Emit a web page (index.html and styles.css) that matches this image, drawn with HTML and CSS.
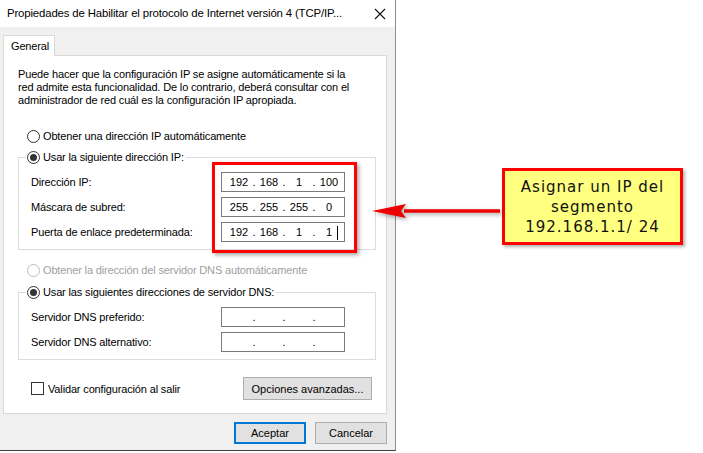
FILE: index.html
```html
<!DOCTYPE html>
<html lang="es">
<head>
    <meta charset="UTF-8">
    <meta name="viewport" content="width=device-width, initial-scale=1.0">
    <link rel="stylesheet" href="styles.css">
    <title>Propiedades TCP/IPv4</title>
</head>
<body>
    <div class="screen">
        <div class="window">
            <div class="titlebar">
                <span class="title">Propiedades de Habilitar el protocolo de Internet versión 4 (TCP/IP...</span>
                <svg class="close" width="12" height="12" viewBox="0 0 12 12">
                    <path d="M1 1 L11 11 M11 1 L1 11" stroke="#111" stroke-width="1.1" fill="none"/>
                </svg>
            </div>

            <div class="client">
                <div class="tabs">
                    <div class="tab">General</div>
                </div>

                <div class="panel">
                    <p class="intro">
                        Puede hacer que la configuración IP se asigne automáticamente si la<br>
                        red admite esta funcionalidad. De lo contrario, deberá consultar con el<br>
                        administrador de red cuál es la configuración IP apropiada.
                    </p>

                    <div class="radio first">
                        <span class="circle"></span>
                        Obtener una dirección IP automáticamente
                    </div>

                    <fieldset class="group">
                        <legend class="radio">
                            <span class="circle checked"></span>
                            Usar la siguiente dirección IP:
                        </legend>
                        <div class="row">
                            <span>Dirección IP:</span>
                            <div class="ip">
                                <span class="seg">192</span><span class="sep">.</span><span class="seg">168</span><span class="sep">.</span><span class="seg">1</span><span class="sep">.</span><span class="seg">100</span>
                            </div>
                        </div>
                        <div class="row">
                            <span>Máscara de subred:</span>
                            <div class="ip">
                                <span class="seg">255</span><span class="sep">.</span><span class="seg">255</span><span class="sep">.</span><span class="seg">255</span><span class="sep">.</span><span class="seg">0</span>
                            </div>
                        </div>
                        <div class="row">
                            <span>Puerta de enlace predeterminada:</span>
                            <div class="ip">
                                <span class="seg">192</span><span class="sep">.</span><span class="seg">168</span><span class="sep">.</span><span class="seg">1</span><span class="sep">.</span><span class="seg caret">1</span>
                            </div>
                        </div>
                    </fieldset>

                    <div class="radio disabled">
                        <span class="circle"></span>
                        Obtener la dirección del servidor DNS automáticamente
                    </div>

                    <fieldset class="group dns">
                        <legend class="radio">
                            <span class="circle checked"></span>
                            Usar las siguientes direcciones de servidor DNS:
                        </legend>
                        <div class="row">
                            <span>Servidor DNS preferido:</span>
                            <div class="ip">
                                <span class="seg"></span><span class="sep">.</span><span class="seg"></span><span class="sep">.</span><span class="seg"></span><span class="sep">.</span><span class="seg"></span>
                            </div>
                        </div>
                        <div class="row">
                            <span>Servidor DNS alternativo:</span>
                            <div class="ip">
                                <span class="seg"></span><span class="sep">.</span><span class="seg"></span><span class="sep">.</span><span class="seg"></span><span class="sep">.</span><span class="seg"></span>
                            </div>
                        </div>
                    </fieldset>

                    <div class="options">
                        <label class="check"><span class="box"></span>Validar configuración al salir</label>
                        <button class="btn">Opciones avanzadas...</button>
                    </div>

                    <!-- red highlight drawn over the three IP fields -->
                    <div class="highlight"></div>
                </div>

                <div class="actions">
                    <button class="btn primary">Aceptar</button>
                    <button class="btn">Cancelar</button>
                </div>
            </div>
        </div>

        <div class="note">
            <div class="callout">Asignar un IP del<br>segmento<br>192.168.1.1/ 24</div>
        </div>

        <svg class="arrow" width="140" height="30" viewBox="0 0 140 30">
            <path d="M36 11 L132 11" stroke="#ee0000" stroke-width="3.5"/>
            <path d="M4 11 L38 4 L33 11 L38 18 Z" fill="#ee0000"/>
        </svg>
    </div>
</body>
</html>
```

FILE: styles.css
```css
* {
    box-sizing: border-box;
}

body {
    margin: 0;
    background-color: #fff;
    font-family: 'Liberation Sans', Arial, sans-serif;
    font-size: 11px;
    letter-spacing: -0.15px;
    color: #000;
}

.screen {
    position: relative;
    display: flex;
    width: 703px;
    height: 453px;
    overflow: hidden;
    white-space: nowrap;
}

.window {
    width: 396px;
    height: 451px;
    border-right: 1px solid #8c8c8c;
    border-bottom: 1px solid #3c3c3c;
    background-color: #f0f0f0;
    display: flex;
    flex-direction: column;
}

.titlebar {
    height: 27px;
    background-color: #fff;
    display: flex;
    align-items: center;
    justify-content: space-between;
    padding: 0 9px 1px 7px;
    font-size: 11.4px;
}

.close {
    margin-top: 1px;
}

.client {
    padding: 8px 8px 0 3px;
}

.tabs {
    display: flex;
    position: relative;
    z-index: 1;
    margin-bottom: -1px;
}

.tab {
    width: 52px;
    height: 21px;
    padding: 4px 0 0 7px;
    background-color: #fff;
    border: 1px solid #d9d9d9;
    border-bottom: none;
}

.panel {
    position: relative;
    background-color: #fff;
    border: 1px solid #d9d9d9;
    padding: 12px 10px 13px 14px;
}

.intro {
    margin: 0;
    line-height: 13px;
}

.radio {
    display: flex;
    align-items: center;
    height: 16px;
    padding-left: 9px;
}

.radio.first {
    margin-top: 21px;
}

.radio.disabled {
    margin-top: 12px;
    color: #a0a0a0;
}

.circle {
    width: 13px;
    height: 13px;
    border: 1px solid #333;
    border-radius: 50%;
    margin-right: 3px;
    background-color: #fff;
    display: flex;
    align-items: center;
    justify-content: center;
}

.radio.disabled .circle {
    border-color: #bcbcbc;
}

.circle.checked::after {
    content: "";
    width: 7px;
    height: 7px;
    border-radius: 50%;
    background-color: #333;
}

.group {
    margin: 5px 0 0 0;
    padding: 7px 30px 7px 12px;
    border: 1px solid #dcdcdc;
    display: flex;
    flex-direction: column;
    gap: 5px;
}

.group.dns {
    margin-top: 6px;
}

.group legend {
    margin-left: -5px;
    padding: 0 2px 0 1px;
}

.row {
    display: flex;
    align-items: center;
    justify-content: space-between;
    height: 20px;
}

.ip {
    width: 124px;
    height: 20px;
    border: 1px solid #7a7a7a;
    display: flex;
    align-items: center;
    padding-left: 5px;
    color: #000;
    letter-spacing: 0;
}

.seg {
    width: 24px;
    text-align: center;
}

.sep {
    width: 6px;
    text-align: center;
}

.caret {
    position: relative;
}

.caret::after {
    content: "";
    position: absolute;
    right: 3px;
    top: 0;
    width: 1px;
    height: 14px;
    background-color: #000;
}

.highlight {
    position: absolute;
    left: 208px;
    top: 106px;
    width: 145px;
    height: 91px;
    border: 3px solid #ff0000;
    box-shadow: 2px 2px 4px rgba(0, 0, 0, 0.35);
}

.options {
    display: flex;
    align-items: center;
    justify-content: space-between;
    margin-top: 17px;
    padding-left: 13px;
}

.check {
    display: flex;
    align-items: center;
}

.box {
    width: 13px;
    height: 13px;
    border: 1px solid #333;
    background-color: #fff;
    margin-right: 4px;
}

.btn {
    font-family: inherit;
    font-size: 11px;
    color: #000;
    background-color: #e1e1e1;
    border: 1px solid #adadad;
    height: 23px;
    padding: 0 4px;
    white-space: nowrap;
}

.options .btn {
    width: 129px;
    margin-right: 4px;
}

.actions {
    display: flex;
    justify-content: flex-end;
    gap: 9px;
    margin-top: 8px;
}

.actions .btn {
    width: 72px;
    height: 22px;
}

.btn.primary {
    border: 2px solid #0078d7;
}

.note {
    flex: 1;
    padding: 168px 0 0 106px;
}

.callout {
    width: 181px;
    height: 77px;
    border: 3px solid #ff0000;
    background-color: #ffff80;
    box-shadow: 2px 2px 3px rgba(0, 0, 0, 0.3);
    font-family: 'DejaVu Sans', Verdana, sans-serif;
    font-size: 15px;
    letter-spacing: 1px;
    line-height: 20px;
    color: #111;
    text-align: center;
    padding-top: 6px;
}

.arrow {
    position: absolute;
    left: 368px;
    top: 200px;
    filter: drop-shadow(2px 2px 2px rgba(0, 0, 0, 0.35));
}
```
